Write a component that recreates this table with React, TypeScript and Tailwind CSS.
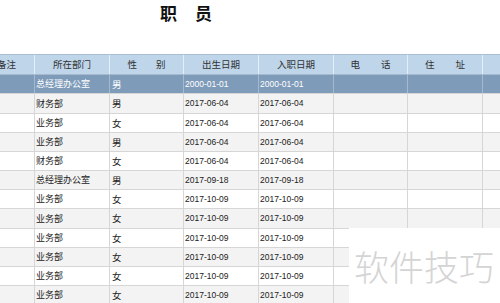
import React from "react";

type Row = { dept: string; sex: string; birth: string; join: string; h: string };

const rows: Row[] = [
  { dept: "总经理办公室", sex: "男", birth: "2000-01-01", join: "2000-01-01", h: "h-[19px]" },
  { dept: "财务部", sex: "男", birth: "2017-06-04", join: "2017-06-04", h: "h-[20px]" },
  { dept: "业务部", sex: "女", birth: "2017-06-04", join: "2017-06-04", h: "h-[19px]" },
  { dept: "业务部", sex: "男", birth: "2017-06-04", join: "2017-06-04", h: "h-[19px]" },
  { dept: "财务部", sex: "女", birth: "2017-06-04", join: "2017-06-04", h: "h-[19px]" },
  { dept: "总经理办公室", sex: "男", birth: "2017-09-18", join: "2017-09-18", h: "h-[19px]" },
  { dept: "业务部", sex: "女", birth: "2017-10-09", join: "2017-10-09", h: "h-[19px]" },
  { dept: "业务部", sex: "女", birth: "2017-10-09", join: "2017-10-09", h: "h-[20px]" },
  { dept: "业务部", sex: "女", birth: "2017-10-09", join: "2017-10-09", h: "h-[19px]" },
  { dept: "业务部", sex: "女", birth: "2017-10-09", join: "2017-10-09", h: "h-[19px]" },
  { dept: "业务部", sex: "女", birth: "2017-10-09", join: "2017-10-09", h: "h-[19px]" },
  { dept: "业务部", sex: "女", birth: "2017-10-09", join: "2017-10-09", h: "h-[19px]" },
];

const grid = "grid grid-cols-[35px_75px_74px_75px_75px_74px_75px_1fr]";
const cjk = "font-['Noto_Sans_CJK_SC',sans-serif]";
const num = "font-['Liberation_Sans','Noto_Sans_CJK_SC',sans-serif]";

export default function App() {
  return (
    <div className="relative w-[500px] h-[303px] overflow-hidden bg-white">
      <div className={`h-[54px] pt-[3px] pl-[160px] flex gap-[18px] text-[17px] font-bold text-[#111] leading-[20px] ${cjk}`}>
        <span>职</span>
        <span>员</span>
      </div>
      <div className="border-t border-[#a9bed3]">
        <div className={`${grid} h-[19px] bg-[#bed5ea] text-[9.5px] text-[#333] ${cjk}`}>
          <div className="border-r border-[#e6eef6] flex items-center justify-end pr-[18px] overflow-hidden whitespace-nowrap">备注</div>
          <div className="border-r border-[#e6eef6] flex items-center justify-center">所在部门</div>
          <div className="border-r border-[#e6eef6] flex items-center justify-center gap-[19px]"><span>性</span><span>别</span></div>
          <div className="border-r border-[#e6eef6] flex items-center justify-center">出生日期</div>
          <div className="border-r border-[#e6eef6] flex items-center justify-center">入职日期</div>
          <div className="border-r border-[#e6eef6] flex items-center justify-center gap-[21px]"><span>电</span><span>话</span></div>
          <div className="border-r border-[#e6eef6] flex items-center justify-center gap-[21px]"><span>住</span><span>址</span></div>
          <div></div>
        </div>
        {rows.map((r, i) => {
          const sel = i === 0;
          const bg = sel ? "bg-[#7e9bb9] text-white" : i % 2 === 1 ? "bg-[#f3f3f3] text-[#222]" : "bg-white text-[#222]";
          const line = sel ? "border-[#a7bacd]" : "border-[#d6d6d6]";
          return (
            <div key={i} className={`${grid} ${r.h} ${bg} border-t ${line}`}>
              <div className={`border-r ${line}`}></div>
              <div className={`border-r ${line} flex items-center pl-[1px] text-[9px] ${cjk}`}>{r.dept}</div>
              <div className={`border-r ${line} flex items-center pl-[2px] text-[9.5px] ${cjk}`}>{r.sex}</div>
              <div className={`border-r ${line} flex items-center pl-[1px] text-[8.5px] ${num}`}>{r.birth}</div>
              <div className={`border-r ${line} flex items-center pl-[1px] text-[8.5px] ${num}`}>{r.join}</div>
              <div className={`border-r ${line}`}></div>
              <div className={`border-r ${line}`}></div>
              <div></div>
            </div>
          );
        })}
      </div>
      <div className="absolute left-[349px] top-[228px] w-[151px] h-[75px] bg-white flex items-center pl-[5px]">
        <span className={`text-[35px] leading-none text-[#d4d4d4] font-light ${cjk}`}>软件技巧</span>
      </div>
    </div>
  );
}
